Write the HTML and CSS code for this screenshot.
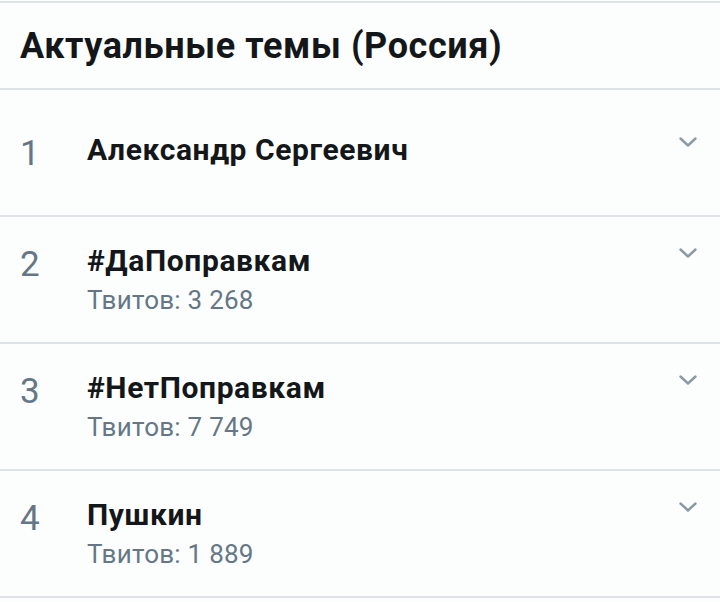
FILE: index.html
```html
<!DOCTYPE html>
<html lang="ru">
<head>
<meta charset="utf-8">
<link rel="stylesheet" href="styles.css">
</head>
<body>
<div class="panel">
  <div class="header"><h1 class="header-title">Актуальные темы (Россия)</h1></div>
  <div class="row">
    <div class="item">
      <div class="num">1</div>
      <div class="main"><div class="title">Александр Сергеевич</div></div>
      <svg class="chev" width="18" height="10" viewBox="0 0 18 10"><path d="M1.5 1.5 L9 8.5 L16.5 1.5" fill="none" stroke="#8c9aa6" stroke-width="2.4" stroke-linecap="round" stroke-linejoin="round"/></svg>
    </div>
  </div>
  <div class="row">
    <div class="item">
      <div class="num">2</div>
      <div class="main"><div class="title">#ДаПоправкам</div><div class="sub">Твитов: 3 268</div></div>
      <svg class="chev" width="18" height="10" viewBox="0 0 18 10"><path d="M1.5 1.5 L9 8.5 L16.5 1.5" fill="none" stroke="#8c9aa6" stroke-width="2.4" stroke-linecap="round" stroke-linejoin="round"/></svg>
    </div>
  </div>
  <div class="row">
    <div class="item">
      <div class="num">3</div>
      <div class="main"><div class="title">#НетПоправкам</div><div class="sub">Твитов: 7 749</div></div>
      <svg class="chev" width="18" height="10" viewBox="0 0 18 10"><path d="M1.5 1.5 L9 8.5 L16.5 1.5" fill="none" stroke="#8c9aa6" stroke-width="2.4" stroke-linecap="round" stroke-linejoin="round"/></svg>
    </div>
  </div>
  <div class="row">
    <div class="item">
      <div class="num">4</div>
      <div class="main"><div class="title">Пушкин</div><div class="sub">Твитов: 1 889</div></div>
      <svg class="chev" width="18" height="10" viewBox="0 0 18 10"><path d="M1.5 1.5 L9 8.5 L16.5 1.5" fill="none" stroke="#8c9aa6" stroke-width="2.4" stroke-linecap="round" stroke-linejoin="round"/></svg>
    </div>
  </div>
</div>
</body>
</html>
```
FILE: styles.css
```css
html, body {
  margin: 0;
  padding: 0;
  background: #fcfdfd;
}
body {
  font-family: Roboto, "Liberation Sans", sans-serif;
  color: #14171a;
}
.panel {
  padding-top: 1px;
}
.header {
  border-top: 2px solid #dde3e6;
  border-bottom: 2px solid #dde3e6;
  height: 85px;
  display: flex;
  align-items: center;
  padding-left: 20px;
}
.header-title {
  margin: 0;
  font-size: 36px;
  font-weight: 700;
  line-height: 44px;
  letter-spacing: 0.6px;
}
.row {
  height: 123px;
  padding-bottom: 2px;
  border-bottom: 2px solid #dde3e6;
  display: flex;
  align-items: center;
}
.item {
  flex: 1;
  display: flex;
  align-items: flex-start;
  padding: 0 23px 0 20px;
}
.num {
  width: 67px;
  font-size: 35px;
  line-height: 36px;
  color: #657786;
  padding-top: 4px;
}
.main {
  flex: 1;
}
.title {
  font-size: 30px;
  font-weight: 700;
  line-height: 36px;
  letter-spacing: 0.6px;
}
.sub {
  font-size: 26px;
  line-height: 28px;
  margin-top: 7px;
  letter-spacing: 0.25px;
  color: #657786;
}
.chev {
  margin-top: 5px;
}
```
